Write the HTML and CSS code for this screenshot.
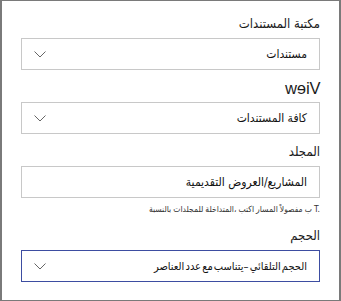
FILE: index.html
```html
<!DOCTYPE html>
<html lang="ar" dir="rtl">
<head>
<meta charset="utf-8">
<title>إعدادات المكتبة</title>
<link rel="stylesheet" href="styles.css">
</head>
<body>
<div class="panel">

<div class="field">
<div class="label">مكتبة المستندات</div>
<div class="box">
<span class="value">مستندات</span>
<svg class="chevron" width="12" height="7" viewBox="0 0 12 7"><path d="M0.5 0.5 L6 6 L11.5 0.5" fill="none" stroke="#666" stroke-width="1"/></svg>
</div>
</div>

<div class="field">
<div class="label"><span class="mirror">View</span></div>
<div class="box">
<span class="value">كافة المستندات</span>
<svg class="chevron" width="12" height="7" viewBox="0 0 12 7"><path d="M0.5 0.5 L6 6 L11.5 0.5" fill="none" stroke="#666" stroke-width="1"/></svg>
</div>
</div>

<div class="field">
<div class="label">المجلد</div>
<div class="box">
<span class="value">المشاريع/العروض التقديمية</span>
</div>
<div class="help">
<span>بالنسبة</span>
<span>للمجلدات</span>
<span>المتداخلة،</span>
<span>اكتب</span>
<span>المسار</span>
<span>مفصولاً</span>
<span>ب</span>
<span>T.</span>
</div>
</div>

<div class="field">
<div class="label">الحجم</div>
<div class="box focused">
<span class="value long">الحجم التلقائي –يتناسب مع عدد العناصر</span>
<svg class="chevron" width="12" height="7" viewBox="0 0 12 7"><path d="M0.5 0.5 L6 6 L11.5 0.5" fill="none" stroke="#666" stroke-width="1"/></svg>
</div>
</div>

</div>
</body>
</html>
```

FILE: styles.css
```css
body {
margin: 0;
font-family: "DejaVu Sans Condensed", "DejaVu Sans", sans-serif;
font-stretch: condensed;
color: #1b1b1b;
background-color: #ffffff;
}

.panel {
width: 299px;
height: 288px;
padding: 11px 19px 0 19px;
border: 2px solid #7a7a7a;
border-top-width: 1px;
border-bottom-width: 1px;
display: flex;
flex-direction: column;
gap: 6px;
}

.label {
height: 16px;
padding-top: 4px;
line-height: 16px;
font-size: 13px;
margin-bottom: 6px;
}

.mirror {
display: inline-block;
transform: scaleX(-1);
font-family: "Liberation Sans", sans-serif;
font-size: 16.5px;
}

.box {
height: 30px;
border: 1px solid #c8c8c8;
display: flex;
align-items: center;
justify-content: space-between;
padding: 0 12px 0 12px;
}

.box.focused {
border-color: #3d4da1;
}

.value {
font-size: 12px;
color: #111;
}

.value.long {
font-size: 11px;
word-spacing: -2px;
}

.chevron {
display: block;
}

.help {
direction: ltr;
display: flex;
justify-content: flex-end;
gap: 2px;
margin-top: 2px;
height: 18px;
line-height: 18px;
font-size: 8.5px;
color: #333;
}
```
